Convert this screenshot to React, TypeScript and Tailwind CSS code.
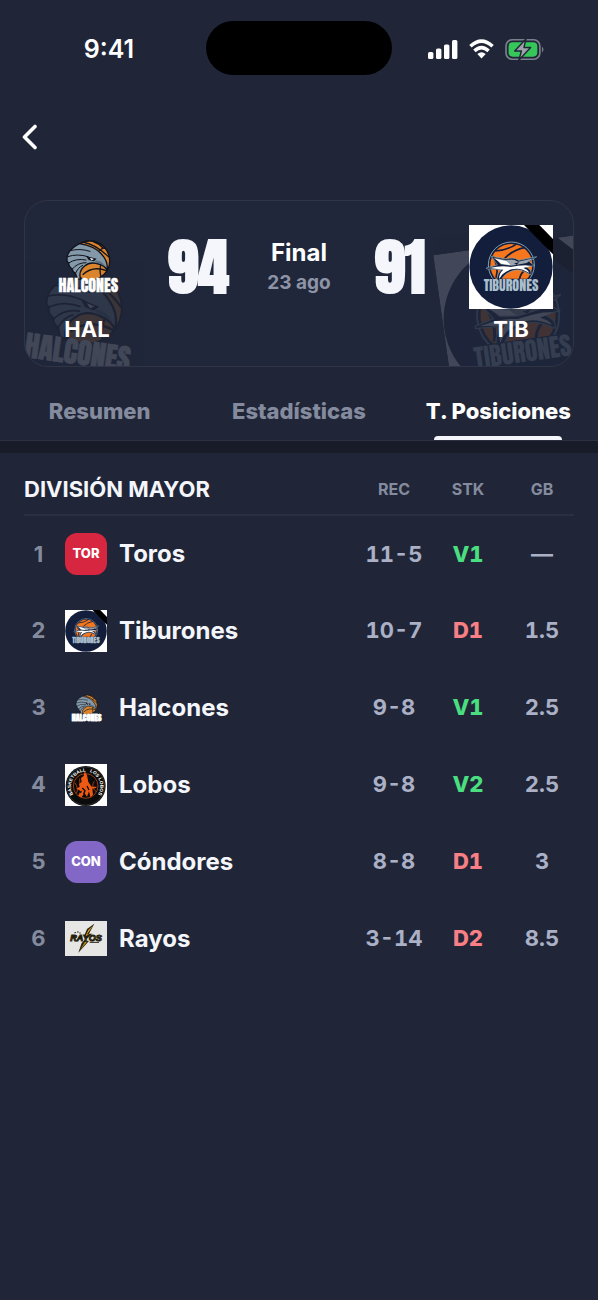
import { clsx } from 'clsx'

type LogoProps = { className?: string }

type Team = {
  name: string
  record: string
  streak: string
  gb: string
  logo: React.ReactNode
}

const logoFont = '"Liberation Sans", sans-serif'
const displayFont = 'Impact, Anton, "Liberation Sans", sans-serif'

function HalconesLogo({ className }: LogoProps) {
  return (
    <svg viewBox="15 -15 252 252" className={className} aria-hidden="true">
      <circle cx="150" cy="92" r="59" fill="#db842e" stroke="#10131c" strokeWidth="4" />
      <g fill="none" stroke="#10131c" strokeWidth="4">
        <path d="M128 36Q170 44 207 82" />
        <path d="M158 34Q176 40 190 55" />
        <path d="M178 62Q192 50 196 56" />
        <path d="M128 134Q158 106 200 122" />
        <path d="M184 100Q176 120 184 142" />
      </g>
      <path
        d="M118 41Q100 50 90 62L84 72Q79 84 82 96L86 98Q86 110 96 116Q98 126 106 130L112 146L122 148Q114 124 134 108Q150 94 176 102Q192 106 202 120Q204 92 184 72Q164 48 118 41Z"
        fill="#8399a9"
        stroke="#10131c"
        strokeWidth="4"
      />
      <g fill="none" stroke="#10131c" strokeWidth="3" strokeLinecap="round">
        <path d="M90 62Q120 54 150 64" />
        <path d="M83 80Q112 70 144 80" />
        <path d="M86 99Q108 84 138 90" />
        <path d="M97 117Q112 98 138 98" />
        <path d="M106 131Q114 112 128 106" />
      </g>
      <path d="M138 78L170 86L162 94L146 90Z" fill="#10131c" />
      <path d="M149 83L162 87L155 91Z" fill="#ffffff" />
      <path d="M166 92Q186 90 198 112Q182 98 164 99Z" fill="#5d7181" />
      <text
        x="145"
        y="187"
        textAnchor="middle"
        fontFamily={displayFont}
        fontSize="48"
        fill="#ffffff"
        stroke="#ffffff"
        strokeWidth="1"
      >
        HALCONES
      </text>
    </svg>
  )
}

function TiburonesLogo({ className }: LogoProps) {
  return (
    <svg viewBox="25 28 252 252" className={className} aria-hidden="true">
      <rect x="25" y="28" width="252" height="252" fill="#ffffff" />
      <circle cx="151" cy="154" r="125" fill="#131d3c" />
      <path d="M190 28H236L277 70V116Z" fill="#000000" />
      <circle cx="152" cy="148" r="69" fill="#131d3c" stroke="#7fa3b5" strokeWidth="3" />
      <circle cx="152" cy="148" r="63" fill="#f5761d" />
      <g fill="none" stroke="#131d3c" strokeWidth="5">
        <path d="M104 106Q140 104 166 86" />
        <path d="M132 128Q158 102 192 96" />
        <path d="M96 122Q116 150 106 186" />
        <path d="M200 158Q180 170 176 192" />
      </g>
      <path
        d="M78 156L110 148Q100 132 92 122L138 130Q158 122 174 134L228 123L206 138L222 150L196 153Q216 164 210 178Q180 158 160 164Q130 172 122 194H108Q110 172 122 162L78 160Z"
        fill="#131d3c"
        stroke="#86abba"
        strokeWidth="2"
      />
      <path d="M98 126L138 134Q156 127 172 138L218 128L198 142L152 150L120 146Q112 134 98 126Z" fill="#9aa5af" />
      <path d="M86 157Q124 148 150 154Q172 150 194 149L212 151L188 157Q202 162 206 172Q178 154 154 161Q126 168 116 190Q114 174 128 162Z" fill="#ffffff" />
      <path d="M104 129L138 137L150 148L122 144Z" fill="#ffffff" />
      <path d="M160 143L176 140L168 147Z" fill="#131d3c" />
      <path d="M66 189H236L240 230H62Z" fill="#131d3c" />
      <text x="151" y="227" textAnchor="middle" fontFamily={displayFont} fontSize="42" fill="#a9bfcd">
        TIBURONES
      </text>
    </svg>
  )
}

function LobosLogo({ className }: LogoProps) {
  return (
    <svg viewBox="0 0 126 126" className={className} aria-hidden="true">
      <defs>
        <path id="lobos-ring" d="M29 96A44 44 0 1 1 95 96" />
      </defs>
      <rect width="126" height="126" fill="#ffffff" />
      <circle cx="62" cy="66" r="60" fill="#0b0b0b" />
      <circle cx="62" cy="66" r="57" fill="none" stroke="#6b6b6b" strokeWidth="1" />
      <circle cx="62" cy="66" r="37" fill="none" stroke="#d9541a" strokeWidth="2" />
      <path
        d="M59 22L66 34L70 54L80 68H96L92 72L82 74L84 92L76 100L72 82L66 98L58 86L50 100L40 96L46 80L34 74L44 68L42 60L50 54L48 42L56 36Z"
        fill="#ee5a14"
      />
      <path d="M30 56Q42 76 34 88M44 44Q40 60 54 70M88 52Q76 66 94 84" fill="none" stroke="#d9541a" strokeWidth="2" />
      <path d="M52 72L60 80L56 90M66 66L72 78M44 86L50 82" fill="none" stroke="#0b0b0b" strokeWidth="4" />
      <text fontFamily={logoFont} fontWeight="700" fontSize="14" fill="#ffffff">
        <textPath href="#lobos-ring" startOffset="50%" textAnchor="middle">
          BASKETBALL&#160;&#160;&#160;LOS LOBOS
        </textPath>
      </text>
    </svg>
  )
}

function RayosLogo({ className }: LogoProps) {
  return (
    <svg viewBox="0 0 126 105" className={className} aria-hidden="true">
      <rect width="126" height="105" fill="#e6e6e4" />
      <path d="M88 8L66 24L56 48H68L50 66L40 95L72 60L60 58L82 38H72Z" fill="#2b2411" />
      <path d="M84 14L70 27L62 44H72L62 56L74 40H66Z" fill="#d8a31c" />
      <path d="M60 62L46 86L66 62Z" fill="#c4921b" />
      <text
        x="63"
        y="60"
        textAnchor="middle"
        fontFamily={logoFont}
        fontWeight="700"
        fontStyle="italic"
        fontSize="27"
        fill="#b58a1c"
        stroke="#211c10"
        strokeWidth="3"
      >
        RAYOS
      </text>
      <path d="M28 35H33M36 33H41M43 36H47M74 64H102" stroke="#2b2411" strokeWidth="3" />
    </svg>
  )
}

function Badge({ code, className }: { code: string; className: string }) {
  return (
    <span
      className={clsx(
        'flex size-[42px] items-center justify-center rounded-xl text-[13px] font-extrabold text-white',
        className,
      )}
    >
      {code}
    </span>
  )
}

const TEAMS: Team[] = [
  { name: 'Toros', record: '11-5', streak: 'V1', gb: '—', logo: <Badge code="TOR" className="bg-[#d7263f]" /> },
  { name: 'Tiburones', record: '10-7', streak: 'D1', gb: '1.5', logo: <TiburonesLogo className="size-[42px]" /> },
  { name: 'Halcones', record: '9-8', streak: 'V1', gb: '2.5', logo: <HalconesLogo className="size-[42px]" /> },
  { name: 'Lobos', record: '9-8', streak: 'V2', gb: '2.5', logo: <LobosLogo className="size-[42px]" /> },
  { name: 'Cóndores', record: '8-8', streak: 'D1', gb: '3', logo: <Badge code="CON" className="bg-[#8367c7]" /> },
  { name: 'Rayos', record: '3-14', streak: 'D2', gb: '8.5', logo: <RayosLogo className="h-[35px] w-[42px]" /> },
]

const TABS = ['Resumen', 'Estadísticas', 'T. Posiciones']

function StatusBar() {
  return (
    <div className="grid grid-cols-[1fr_186px_1fr] items-center pt-[21px]">
      <span className="pt-0.5 pl-3 text-center text-[25px] leading-8 font-semibold text-white">9:41</span>
      <div className="h-[54px] rounded-full bg-black" />
      <div className="flex items-center justify-center gap-[11px] pt-0.5 pr-[18px]">
        <svg viewBox="0 0 30 20" className="h-5 w-[30px]" fill="#ffffff" aria-hidden="true">
          <rect x="0" y="13" width="5.4" height="7" rx="1.6" />
          <rect x="8" y="9.5" width="5.4" height="10.5" rx="1.6" />
          <rect x="16" y="5.5" width="5.4" height="14.5" rx="1.6" />
          <rect x="24" y="1" width="5.4" height="19" rx="1.6" />
        </svg>
        <svg viewBox="0 0 24 19" className="h-5 w-[25px]" aria-hidden="true">
          <g fill="none" stroke="#ffffff" strokeWidth="3.4">
            <path d="M1.4 6.9Q12 -3 22.6 6.9" />
            <path d="M5.2 11.3Q12 5 18.8 11.3" />
          </g>
          <path d="M8 14.4Q12 11 16 14.4L12 18.6Z" fill="#ffffff" />
        </svg>
        <svg viewBox="1 1.5 39 22" className="h-[23px] w-10" aria-hidden="true">
          <rect x="2" y="3" width="33" height="19" rx="6" fill="none" stroke="#7b808c" strokeWidth="1.6" />
          <rect x="4.5" y="5.5" width="28" height="14" rx="4" fill="#35c759" />
          <path d="M37 9.5Q40 12.5 37 15.5Z" fill="#7b808c" />
          <path
            d="M21.5 2L10.5 14H17L14.5 23L26 10.5H19.5Z"
            fill="#9da1a9"
            stroke="#202637"
            strokeWidth="1.4"
            strokeLinejoin="round"
          />
        </svg>
      </div>
    </div>
  )
}

function TeamSide({ code, logo }: { code: string; logo: React.ReactNode }) {
  return (
    <div className="flex w-[84px] flex-col items-center gap-1.5">
      {logo}
      <span className="text-[22px] leading-7 font-bold text-white">{code}</span>
    </div>
  )
}

function Score({ value }: { value: number }) {
  return (
    <span
      className="flex-1 text-center text-[62px] leading-[84px] font-black text-[#f4f6fc]"
      style={{ fontFamily: displayFont }}
    >
      {value}
    </span>
  )
}

function ScoreCard() {
  return (
    <section className="relative mx-6 mt-[43px] overflow-hidden rounded-3xl border border-[#2f3547] bg-[#20273a] px-5 pt-6 pb-[23px]">
      <HalconesLogo className="absolute -bottom-7 -left-5 size-[150px] rotate-8 opacity-15" />
      <TiburonesLogo className="absolute -right-5 -bottom-7 size-[150px] -rotate-8 opacity-15" />
      <div className="relative flex items-start">
        <TeamSide code="HAL" logo={<HalconesLogo className="size-[84px]" />} />
        <Score value={94} />
        <div className="pt-3 text-center">
          <p className="text-2xl leading-8 font-bold text-white">Final</p>
          <p className="text-[19px] leading-7 font-bold text-[#8e93a6]">23 ago</p>
        </div>
        <Score value={91} />
        <TeamSide code="TIB" logo={<TiburonesLogo className="size-[84px]" />} />
      </div>
    </section>
  )
}

function Tabs({ active }: { active: string }) {
  return (
    <nav role="tablist" className="mt-2 grid grid-cols-3 border-b border-[#2d3242]">
      {TABS.map((tab) => {
        const selected = tab === active
        return (
          <button
            key={tab}
            type="button"
            role="tab"
            aria-selected={selected}
            className={clsx(
              'flex flex-col items-center text-[22px] leading-8 font-extrabold whitespace-nowrap',
              selected ? 'text-white' : 'text-[#858b9e]',
            )}
          >
            <span className="pt-5 pb-[9px]">{tab}</span>
            <span className={clsx('h-1 w-32 rounded-t', selected && 'bg-[#f4f6fc]')} />
          </button>
        )
      })}
    </nav>
  )
}

function Standings() {
  return (
    <section className="px-6 pt-[11px]">
      <table className="w-full table-fixed border-collapse">
        <colgroup>
          <col className="w-[41px]" />
          <col className="w-[54px]" />
          <col />
          <col className="w-16" />
          <col className="w-[84px]" />
          <col className="w-16" />
        </colgroup>
        <thead>
          <tr className="h-[51px] border-b-2 border-[#2a3041] text-base text-[#858b9e]">
            <th scope="colgroup" colSpan={3} className="text-left text-[22px] font-bold text-[#f4f6fc]">
              DIVISIÓN MAYOR
            </th>
            <th scope="col" className="font-bold">REC</th>
            <th scope="col" className="font-bold">STK</th>
            <th scope="col" className="font-bold">GB</th>
          </tr>
        </thead>
        <tbody>
          {TEAMS.map((team, i) => (
            <tr key={team.name} className="h-[77px] text-center text-[22px] font-bold text-[#aab0c6]">
              <td className="pr-3 text-[#858b9e]">{i + 1}</td>
              <td>{team.logo}</td>
              <th scope="row" className="text-left text-2xl font-bold text-[#f4f6fc]">
                {team.name}
              </th>
              <td className="whitespace-nowrap tabular-nums">{team.record}</td>
              <td
                className={clsx(
                  'font-extrabold tabular-nums',
                  team.streak.startsWith('V') ? 'text-[#4ade80]' : 'text-[#f87f86]',
                )}
              >
                {team.streak}
              </td>
              <td className="tabular-nums">{team.gb}</td>
            </tr>
          ))}
        </tbody>
      </table>
    </section>
  )
}

export default function App() {
  return (
    <div className="min-h-screen bg-[#202637] font-['Inter',sans-serif]">
      <StatusBar />
      <button type="button" aria-label="Volver" className="mt-[42px] ml-2.5 flex size-10 items-center justify-center">
        <svg viewBox="0 0 16 26" className="h-[26px] w-4" fill="none" aria-hidden="true">
          <path d="M13 2.5L2.5 13L13 23.5" stroke="#ffffff" strokeWidth="3.6" strokeLinecap="round" strokeLinejoin="round" />
        </svg>
      </button>
      <ScoreCard />
      <Tabs active="T. Posiciones" />
      <div className="h-3 bg-[#171c28]" />
      <Standings />
    </div>
  )
}
